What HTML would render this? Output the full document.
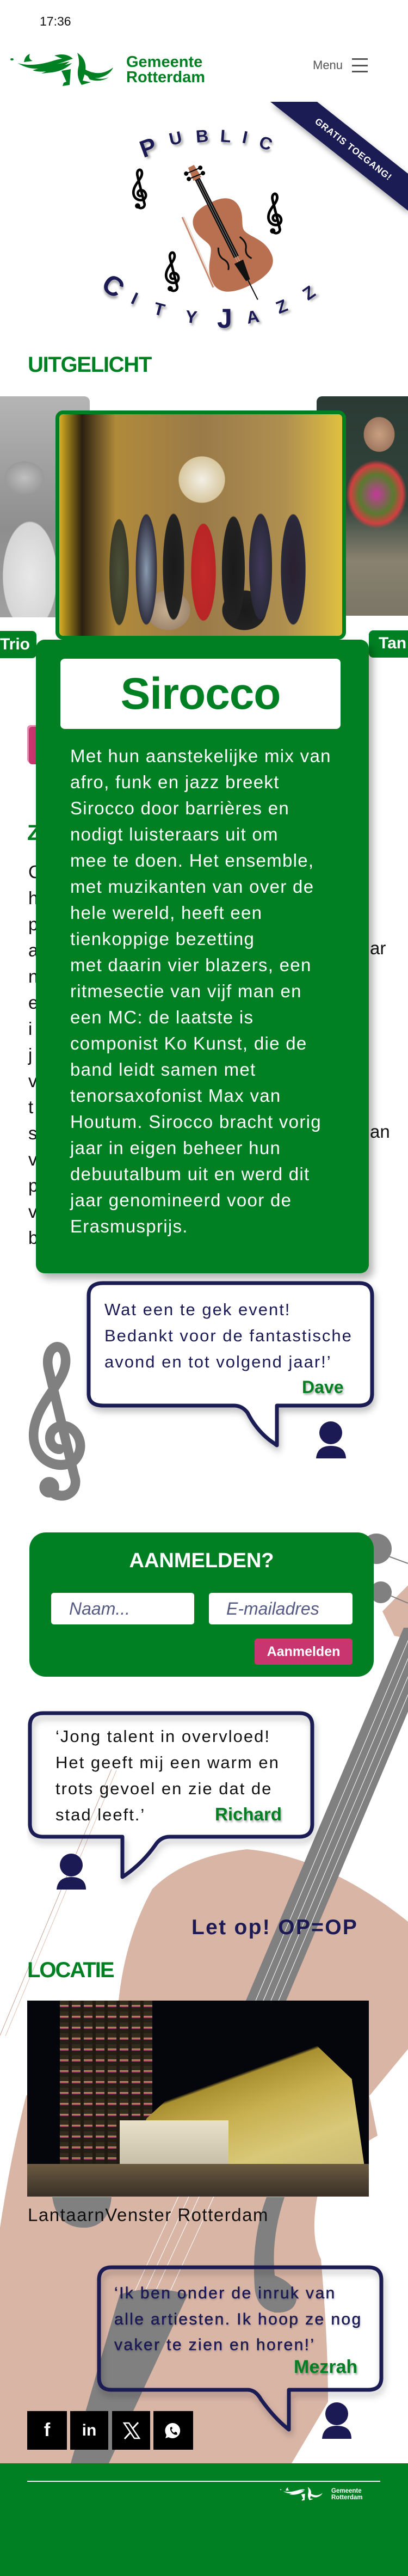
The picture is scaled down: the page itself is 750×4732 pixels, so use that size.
<!DOCTYPE html>
<html><head><meta charset="utf-8">
<style>
*{margin:0;padding:0;box-sizing:border-box}
body{width:750px;height:4732px;position:relative;overflow:hidden;background:#fff;font-family:"Liberation Sans",Arial,sans-serif;color:#111}
.a{position:absolute;white-space:nowrap}
.g{color:#008022}
.nv{color:#1b1a55}
.b{font-weight:bold}
.lt{position:absolute;font-weight:bold;color:#1b1a55;text-shadow:3px 4px 4px rgba(0,0,0,.35);line-height:1}
.shadow{text-shadow:2px 3px 3px rgba(0,0,0,.3)}
</style></head><body>

<div class="a" style="left:73px;top:26px;font-size:23px;">17:36</div>

<svg class="a" style="left:0;top:80px" width="230" height="100" viewBox="0 0 230 100">
<g fill="#008022">
<ellipse cx="22" cy="29" rx="3" ry="2"/>
<path d="M33 36 Q60 44 100 31 Q120 25 130 29 Q100 41 70 46 Q50 47 33 36Z"/>
<path d="M44 34 Q46 22 55 19 Q51 28 60 32Z"/>
<path d="M60 49 Q90 40 128 33 Q112 47 88 51 Q70 53 60 49Z"/>
<path d="M76 55 Q100 44 132 36 Q118 50 96 53Z"/>
<path d="M100 22 Q122 16 134 28 L122 31Z"/>
<path d="M113 50 L130 47 L128 76 L115 78 L117 72 L122 70Z"/>
<path d="M142 17 Q162 30 156 55 L152 68 L167 71 L150 76 Q139 60 145 40 Q146 28 142 17Z"/>
<path d="M152 45 Q182 64 208 44 Q202 58 182 63 Q166 65 150 53Z"/>
<path d="M158 55 Q180 70 200 62 Q185 72 165 66Z"/>
</g></svg>
<div class="a g b" style="left:232px;top:100px;font-size:29px;line-height:28px;">Gemeente<br>Rotterdam</div>
<div class="a" style="left:575px;top:107px;font-size:22px;color:#555;">Menu</div>
<div class="a" style="left:647px;top:107px;width:29px;height:2.5px;background:#555"></div>
<div class="a" style="left:647px;top:119px;width:29px;height:2.5px;background:#555"></div>
<div class="a" style="left:647px;top:130px;width:29px;height:2.5px;background:#555"></div>

<svg class="a" style="left:0;top:0" width="750" height="420">
<defs><filter id="sh" x="-20%" y="-20%" width="140%" height="140%"><feDropShadow dx="2" dy="6" stdDeviation="5" flood-opacity=".35"/></filter></defs>
<polygon points="497,187 583,187 750,319 750,387" fill="#1b1a55" filter="url(#sh)"/>
<text x="650" y="280" transform="rotate(38 650 274)" text-anchor="middle" font-family="Liberation Sans" font-weight="bold" font-size="17" fill="#fff" letter-spacing="1">GRATIS TOEGANG!</text>
</svg>

<div class="lt" style="left:258px;top:250px;font-size:44px;transform:rotate(-20deg)">P</div>
<div class="lt" style="left:311px;top:238px;font-size:32px;transform:rotate(-12deg)">U</div>
<div class="lt" style="left:360px;top:234px;font-size:32px;transform:rotate(-4deg)">B</div>
<div class="lt" style="left:405px;top:234px;font-size:32px;transform:rotate(4deg)">L</div>
<div class="lt" style="left:446px;top:236px;font-size:32px;transform:rotate(12deg)">I</div>
<div class="lt" style="left:477px;top:247px;font-size:32px;transform:rotate(20deg)">C</div>

<div class="lt" style="left:190px;top:500px;font-size:50px;transform:rotate(35deg)">C</div>
<div class="lt" style="left:243px;top:532px;font-size:32px;transform:rotate(25deg)">I</div>
<div class="lt" style="left:283px;top:552px;font-size:32px;transform:rotate(15deg)">T</div>
<div class="lt" style="left:341px;top:566px;font-size:32px;transform:rotate(6deg)">Y</div>
<div class="lt" style="left:399px;top:560px;font-size:50px;transform:rotate(0deg)">J</div>
<div class="lt" style="left:453px;top:566px;font-size:32px;transform:rotate(-10deg)">A</div>
<div class="lt" style="left:508px;top:547px;font-size:32px;transform:rotate(-22deg)">Z</div>
<div class="lt" style="left:558px;top:522px;font-size:32px;transform:rotate(-35deg)">Z</div>

<svg class="a" style="left:0;top:0" width="750" height="640">
<defs>
<g id="clef"><path d="M38 200 C55 215 78 200 70 180 L35 40 C28 10 55 0 58 25 C62 55 20 80 15 120 C10 160 50 175 70 160 C90 140 70 110 50 115 C30 120 35 145 50 145" fill="none" stroke-width="13" stroke-linecap="round"/><circle cx="36" cy="195" r="13"/></g>
</defs>
<line x1="335" y1="399" x2="392" y2="528" stroke="#c98a70" stroke-width="3"/>
<line x1="338" y1="398" x2="395" y2="527" stroke="#e6c4b4" stroke-width="1"/>
<g transform="translate(421,445) rotate(-26.6)">
<path d="M0 -80 C35 -82 50 -65 45 -40 C42 -25 32 -15 35 -5 C40 10 62 25 60 55 C58 85 20 88 0 88 C-20 88 -58 85 -60 55 C-62 25 -40 10 -35 -5 C-32 -15 -42 -25 -45 -40 C-50 -65 -35 -82 0 -80Z" fill="#b87050"/>
<path d="M-6 -156 L6 -156 L8 -130 L-8 -130Z" fill="#b87050"/>
<circle cx="-14" cy="-148" r="4"/><circle cx="14" cy="-146" r="4"/><circle cx="-14" cy="-137" r="4"/><circle cx="14" cy="-135" r="4"/>
<line x1="-14" y1="-148" x2="14" y2="-146" stroke="#000" stroke-width="2"/>
<line x1="-14" y1="-137" x2="14" y2="-135" stroke="#000" stroke-width="2"/>
<rect x="-5" y="-130" width="10" height="160" fill="#111"/>
<line x1="-2" y1="-128" x2="-2" y2="45" stroke="#ddd" stroke-width=".6"/>
<line x1="2" y1="-128" x2="2" y2="45" stroke="#ddd" stroke-width=".6"/>
<path d="M-9 40 L9 40 L4 78 L-4 78Z" fill="#111"/>
<line x1="0" y1="78" x2="0" y2="118" stroke="#111" stroke-width="2"/>
<path d="M-22 0 Q-30 15 -22 25 Q-16 35 -24 45" fill="none" stroke="#111" stroke-width="3"/>
<path d="M22 0 Q30 15 22 25 Q16 35 24 45" fill="none" stroke="#111" stroke-width="3"/>
</g>
<use href="#clef" fill="#000" stroke="#000" transform="translate(240,308) scale(.36)"/>
<use href="#clef" fill="#000" stroke="#000" transform="translate(488,352) scale(.37)"/>
<use href="#clef" fill="#000" stroke="#000" transform="translate(300,460) scale(.36)"/>
</svg>

<div class="a g b" style="left:51px;top:648px;font-size:40px;letter-spacing:-1.3px;">UITGELICHT</div>

<div class="a" style="left:0;top:728px;width:165px;height:406px;border-radius:0 10px 10px 0;background:radial-gradient(ellipse 60px 50px at 45px 150px,#c0c0c0 0,#9a9a9a 60%,transparent 62%),radial-gradient(ellipse 70px 140px at 55px 330px,#e8e8e8 0,#d5d5d5 70%,transparent 72%),linear-gradient(180deg,#b5b5b5,#8e8e8e 60%,#a0a0a0);"></div>
<div class="a" style="left:582px;top:728px;width:168px;height:403px;border-radius:10px 0 0 10px;background:radial-gradient(ellipse 40px 45px at 115px 70px,#c8a080 0,#a07860 70%,transparent 72%),radial-gradient(ellipse 80px 90px at 110px 180px,#c23a9a 0,#5a7a30 40%,#d04040 60%,transparent 70%),linear-gradient(180deg,#2b3a34 0,#31443c 50%,#8a8270 75%,#7a7566 100%);"></div>
<div class="a" style="left:102px;top:754px;width:534px;height:421px;border:7px solid #008022;border-radius:14px;overflow:hidden;background:
radial-gradient(ellipse 60px 60px at 262px 120px,#f2efe6 0,#d8c8a0 70%,transparent 72%),
linear-gradient(90deg,#d8b020 0,#2a2010 8%,#b08a3a 20%,#9a7a48 50%,#b09050 80%,#e0c040 100%);">
<div style="position:absolute;left:70px;top:150px;width:390px;height:260px;background:
radial-gradient(ellipse 28px 110px at 195px 140px,#c42a2a 0,#b82525 80%,transparent 82%),
radial-gradient(ellipse 22px 120px at 40px 140px,#4a5038 0,#3a3a2a 80%,transparent 82%),
radial-gradient(ellipse 24px 125px at 90px 135px,#8a9ab0 0,#303040 80%,transparent 82%),
radial-gradient(ellipse 24px 120px at 140px 130px,#1a1a1a 0,#222 80%,transparent 82%),
radial-gradient(ellipse 26px 120px at 250px 135px,#1a1a1a 0,#222 80%,transparent 82%),
radial-gradient(ellipse 26px 120px at 300px 130px,#40385a 0,#2a2a3a 80%,transparent 82%),
radial-gradient(ellipse 28px 125px at 360px 135px,#2a2030 0,#2a2a3a 80%,transparent 82%),
radial-gradient(ellipse 50px 45px at 130px 210px,#c8b090 0,#a08870 80%,transparent 82%),
radial-gradient(ellipse 50px 45px at 270px 210px,#1a1a1a 0,#222 80%,transparent 82%);"></div>
</div>
<div class="a b" style="left:0;top:1159px;width:67px;height:50px;background:#008022;border-radius:0 8px 8px 0;color:#fff;font-size:30px;line-height:50px;text-align:right;padding-right:16px;">Trio</div>
<div class="a b" style="left:678px;top:1158px;width:80px;height:50px;background:#008022;border-radius:8px 0 0 8px;color:#fff;font-size:30px;line-height:48px;padding-left:18px;">Tan</div>

<div class="a" style="left:53px;top:1335px;width:30px;height:69px;background:#c9356f;border-radius:6px;box-shadow:-3px -3px 0 #e58ab0"></div>
<div class="a g b" style="left:50px;top:1508px;font-size:40px;">Z</div>
<div class="a" style="left:52px;top:1578px;font-size:33px;line-height:48px;white-space:pre;">C
h
p
a
n
e
i
j
v
t
s
v
p
v
b</div>
<div class="a" style="left:680px;top:1723px;font-size:33px;">ar</div>
<div class="a" style="left:680px;top:2060px;font-size:33px;">an</div>

<div class="a" style="left:66px;top:1175px;width:612px;height:1164px;background:#008022;border-radius:16px;box-shadow:8px 10px 14px rgba(0,0,0,.3);"></div>
<div class="a g b" style="left:111px;top:1210px;width:515px;height:129px;background:#fff;border-radius:8px;text-align:center;font-size:82px;line-height:129px;letter-spacing:-1px;">Sirocco</div>
<div class="a" style="left:129px;top:1365px;font-size:33px;line-height:48px;letter-spacing:1.3px;color:#fff;">Met hun aanstekelijke mix van<br>afro, funk en jazz breekt<br>Sirocco door barrières en<br>nodigt luisteraars uit om<br>mee te doen. Het ensemble,<br>met muzikanten van over de<br>hele wereld, heeft een<br>tienkoppige bezetting<br>met daarin vier blazers, een<br>ritmesectie van vijf man en<br>een MC: de laatste is<br>componist Ko Kunst, die de<br>band leidt samen met<br>tenorsaxofonist Max van<br>Houtum. Sirocco bracht vorig<br>jaar in eigen beheer hun<br>debuutalbum uit en werd dit<br>jaar genomineerd voor de<br>Erasmusprijs.</div>

<svg class="a" style="left:0;top:2340px" width="750" height="440">
<defs>
<filter id="bs" x="-10%" y="-10%" width="130%" height="130%"><feDropShadow dx="3" dy="8" stdDeviation="6" flood-opacity=".25"/></filter>
<g id="clef2"><path d="M38 200 C55 215 78 200 70 180 L35 40 C28 10 55 0 58 25 C62 55 20 80 15 120 C10 160 50 175 70 160 C90 140 70 110 50 115 C30 120 35 145 50 145" fill="none" stroke-width="13" stroke-linecap="round"/><circle cx="36" cy="195" r="13"/></g>
</defs>
<use href="#clef2" fill="#808080" stroke="#808080" transform="translate(42,119) scale(1.35,1.4)"/>
<path transform="translate(160,10)" d="M30 7 H500 Q524 7 524 30 V210 Q524 232 500 232 H349 V305 L335 295 Q310 275 295 245 Q285 232 270 232 H30 Q3 232 3 210 V30 Q3 7 30 7Z" fill="#fff" stroke="#1b1a55" stroke-width="7" stroke-linejoin="round" filter="url(#bs)"/>
<circle cx="608" cy="292" r="21" fill="#1b1a55"/>
<path d="M581 339 Q583 316 608 316 Q635 316 636 339Z" fill="#1b1a55"/>
</svg>
<div class="a nv" style="left:192px;top:2382px;font-size:31px;line-height:48px;letter-spacing:2px;">Wat een te gek event!<br>Bedankt voor de fantastische<br>avond en tot volgend jaar!’</div>
<div class="a g b shadow" style="left:555px;top:2530px;font-size:32px;">Dave</div>

<svg class="a" style="left:0;top:2780px" width="750" height="1750">
<g transform="translate(0,-2780)">
<path d="M218 3675 Q230 3560 280 3470 Q340 3410 454 3397 Q600 3410 750 3530 L750 3764 L679 3850 L694 3923 Q622 3962 583 4036 Q570 4110 590 4150 Q603 4300 603 4412 L536 4525 L0 4525 L0 4092 Q20 3960 48 3850 Z" fill="#d9b5a6"/>
<path d="M703 2960 L750 2912 L750 3010 L725 3005Z" fill="#d9b5a6"/>
<circle cx="692" cy="2845" r="28" fill="#808080"/>
<circle cx="700" cy="2925" r="20" fill="#808080"/>
<line x1="712" y1="2858" x2="750" y2="2872" stroke="#808080" stroke-width="2"/>
<line x1="715" y1="2930" x2="750" y2="2945" stroke="#808080" stroke-width="2"/>
<polygon points="742,2990 815,2990 526,3675 452,3675" fill="#808080"/>
<g stroke="#fff" stroke-width="1">
<line x1="758" y1="2995" x2="470" y2="3675"/>
<line x1="772" y1="2995" x2="484" y2="3675"/>
<line x1="786" y1="2995" x2="498" y2="3675"/>
<line x1="800" y1="2995" x2="512" y2="3675"/>
<line x1="328" y1="4035" x2="245" y2="4215"/>
<line x1="347" y1="4035" x2="264" y2="4215"/>
<line x1="366" y1="4035" x2="283" y2="4215"/>
<line x1="393" y1="4035" x2="310" y2="4215"/>
</g>
<path d="M96 4036 Q105 4095 160 4092 Q200 4088 205 4036Z" fill="#808080"/>
<path d="M220 4215 Q280 4195 345 4215 L200 4525 L130 4525 Q180 4350 220 4215Z" fill="#808080"/>
<path d="M490 4036 L523 4036 Q498 4110 505 4180 Q545 4195 545 4225 Q540 4250 505 4248 Q470 4240 468 4200 Q462 4110 490 4036Z" fill="#808080"/>
<line x1="205" y1="3250" x2="0" y2="3739" stroke="#c9a090" stroke-width="1"/>
<line x1="214" y1="3252" x2="10" y2="3740" stroke="#e0c0b0" stroke-width="1"/>
</g>
</svg>

<div class="a" style="left:54px;top:2815px;width:633px;height:265px;background:#008022;border-radius:30px;"></div>
<div class="a b" style="left:54px;top:2846px;width:633px;text-align:center;font-size:38px;color:#fff;">AANMELDEN?</div>
<div class="a" style="left:94px;top:2926px;width:263px;height:58px;background:#fff;border-radius:5px;font-size:32px;font-style:italic;color:#555a85;line-height:58px;padding-left:33px;">Naam...</div>
<div class="a" style="left:384px;top:2926px;width:264px;height:58px;background:#fff;border-radius:5px;font-size:32px;font-style:italic;color:#555a85;line-height:58px;padding-left:32px;">E-mailadres</div>
<div class="a b" style="left:468px;top:3010px;width:180px;height:48px;background:#c9356f;border-radius:5px;color:#fff;font-size:25px;line-height:48px;text-align:center;">Aanmelden</div>

<svg class="a" style="left:50px;top:3140px" width="540" height="340">
<path d="M30 7 H500 Q524 7 524 30 V210 Q524 234 500 234 H262 Q245 234 235 250 Q210 285 175 308 V234 H30 Q5 234 5 210 V30 Q5 7 30 7Z" fill="none" stroke="#1b1a55" stroke-width="7" stroke-linejoin="round" filter="url(#bs)"/>
<circle cx="81" cy="286" r="21" fill="#1b1a55"/>
<path d="M54 331 Q56 308 81 308 Q108 308 108 331Z" fill="#1b1a55"/>
</svg>
<div class="a" style="left:102px;top:3166px;font-size:31px;line-height:48px;letter-spacing:2px;color:#111;">‘Jong talent in overvloed!<br>Het geeft mij een warm en<br>trots gevoel en zie dat de<br>stad leeft.’</div>
<div class="a g b shadow" style="left:395px;top:3314px;font-size:33px;">Richard</div>

<div class="a nv b" style="left:352px;top:3519px;font-size:39px;letter-spacing:2.3px;">Let op! OP=OP</div>
<div class="a g b" style="left:50px;top:3597px;font-size:40px;letter-spacing:-2px;">LOCATIE</div>

<div class="a" style="left:50px;top:3675px;width:628px;height:360px;overflow:hidden;background:#05050c;">
<div style="position:absolute;left:60px;top:0;width:170px;height:360px;background:repeating-linear-gradient(180deg,#3a3020 0,#3a3020 8px,#e0c040 8px,#b04090 12px,#2a2418 12px,#2a2418 20px);opacity:.85"></div>
<div style="position:absolute;left:60px;top:0;width:170px;height:360px;background:repeating-linear-gradient(90deg,transparent 0,transparent 16px,#201a10 16px,#201a10 22px)"></div>
<div style="position:absolute;left:0;top:0;width:628px;height:360px;background:linear-gradient(160deg,transparent 0,transparent 47%,#a89030 48%,#c8b050 60%,#d8c878 75%,#c0b070 100%);clip-path:polygon(25% 100%,35% 60%,60% 20%,80% 15%,95% 40%,100% 100%)"></div>
<div style="position:absolute;left:0;top:300px;width:628px;height:60px;background:linear-gradient(180deg,#6a5a40,#3a3028)"></div>
<div style="position:absolute;left:170px;top:220px;width:200px;height:80px;background:linear-gradient(180deg,#e8e0c8,#c8c0a8)"></div>
</div>
<div class="a" style="left:51px;top:4050px;font-size:33px;letter-spacing:1.5px;color:#111;">LantaarnVenster Rotterdam</div>

<svg class="a" style="left:175px;top:4158px" width="560" height="340">
<path d="M30 7 H502 Q526 7 526 30 V210 Q526 232 502 232 H356 V305 Q330 285 305 250 Q295 232 280 232 H30 Q7 232 7 210 V30 Q7 7 30 7Z" fill="none" stroke="#1b1a55" stroke-width="7" stroke-linejoin="round" filter="url(#bs)"/>
<circle cx="444" cy="276" r="21" fill="#1b1a55"/>
<path d="M417 322 Q419 298 444 298 Q471 298 471 322Z" fill="#1b1a55"/>
</svg>
<div class="a nv" style="left:210px;top:4189px;font-size:30px;line-height:47.5px;letter-spacing:2.4px;-webkit-text-stroke:.5px #1b1a55;text-shadow:1px 2px 3px rgba(0,0,0,.25);">‘Ik ben onder de inruk van<br>alle artiesten. Ik hoop ze nog<br>vaker te zien en horen!’</div>
<div class="a g b shadow" style="left:540px;top:4329px;font-size:34px;">Mezrah</div>

<div class="a b" style="left:50px;top:4429px;width:73px;height:71px;background:#000;color:#fff;font-size:34px;line-height:71px;text-align:center;">f</div>
<div class="a b" style="left:129px;top:4429px;width:70px;height:71px;background:#000;color:#fff;font-size:30px;line-height:71px;text-align:center;">in</div>
<div class="a" style="left:206px;top:4429px;width:70px;height:71px;background:#000;"><svg width="70" height="71"><path d="M22 22 L31 22 L50 50 L41 50Z" fill="none" stroke="#fff" stroke-width="2.5"/><line x1="48" y1="21" x2="37" y2="33" stroke="#fff" stroke-width="3"/><line x1="34" y1="39" x2="23" y2="51" stroke="#fff" stroke-width="3"/></svg></div>
<div class="a" style="left:282px;top:4429px;width:73px;height:71px;background:#000;"><svg width="73" height="71"><path d="M36 22 A14 14 0 1 1 28 48 L22 50 L24 44 A14 14 0 0 1 36 22Z" fill="#fff"/><path d="M31 30 Q30 36 35 41 Q40 45 44 43 L43 39 L40 38 L38 40 Q34 38 33 34 L35 32 L34 29Z" fill="#000"/></svg></div>

<div class="a" style="left:0;top:4525px;width:750px;height:207px;background:#008022;"></div>
<div class="a" style="left:50px;top:4557px;width:649px;height:2px;background:#fff;"></div>
<svg class="a" style="left:507px;top:4561px" width="95" height="42" viewBox="0 0 230 100">
<g fill="#fff">
<ellipse cx="22" cy="29" rx="3" ry="2"/>
<path d="M33 36 Q60 44 100 31 Q120 25 130 29 Q100 41 70 46 Q50 47 33 36Z"/>
<path d="M44 34 Q46 22 55 19 Q51 28 60 32Z"/>
<path d="M60 49 Q90 40 128 33 Q112 47 88 51 Q70 53 60 49Z"/>
<path d="M113 50 L130 47 L128 76 L115 78 L117 72 L122 70Z"/>
<path d="M142 17 Q162 30 156 55 L152 68 L167 71 L150 76 Q139 60 145 40 Q146 28 142 17Z"/>
<path d="M152 45 Q182 64 208 44 Q202 58 182 63 Q166 65 150 53Z"/>
</g></svg>
<div class="a b" style="left:609px;top:4570px;font-size:11.5px;line-height:12px;color:#fff;">Gemeente<br>Rotterdam</div>

</body></html>
